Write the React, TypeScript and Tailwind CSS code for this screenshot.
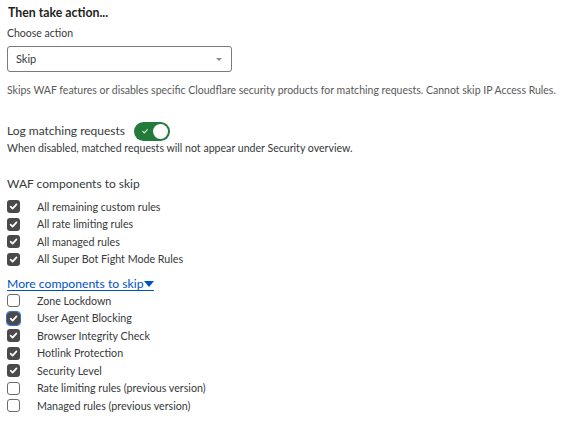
import { useState } from "react";

const waf = [
  "All remaining custom rules",
  "All rate limiting rules",
  "All managed rules",
  "All Super Bot Fight Mode Rules",
];

const more: { label: string; checked: boolean; focused?: boolean }[] = [
  { label: "Zone Lockdown", checked: false },
  { label: "User Agent Blocking", checked: true, focused: true },
  { label: "Browser Integrity Check", checked: true },
  { label: "Hotlink Protection", checked: true },
  { label: "Security Level", checked: true },
  { label: "Rate limiting rules (previous version)", checked: false },
  { label: "Managed rules (previous version)", checked: false },
];

const Box = ({ checked, focused }: { checked: boolean; focused?: boolean }) => (
  <span
    className={`flex h-[13px] w-[13px] items-center justify-center rounded-[3px] ${
      checked ? "bg-[#4a4a4a]" : "border border-[#6b6b6b] bg-white"
    } ${focused ? "outline outline-1 outline-[#2f6fdc]" : ""}`}
  >
    {checked && (
      <svg width="9" height="9" viewBox="0 0 10 10" fill="none">
        <path d="M1.8 5.2 4 7.3 8.3 2.6" stroke="white" strokeWidth="1.9" strokeLinecap="round" strokeLinejoin="round" />
      </svg>
    )}
  </span>
);

const Row = ({ label, checked, focused }: { label: string; checked: boolean; focused?: boolean }) => (
  <div className="flex h-[17.5px] items-center">
    <div className="w-[37px] pl-[7px]">
      <Box checked={checked} focused={focused} />
    </div>
    <span className="text-[10.7px] text-[#36393a]">{label}</span>
  </div>
);

export default function App() {
  const [log, setLog] = useState(true);
  return (
    <div className="min-h-screen bg-white font-['Lato',sans-serif] text-[#36393a]">
      <div className="pt-[4px]">
        <h4 className="pl-[8px] text-[12.3px] font-bold leading-[17px] text-[#1d1f20]">Then take action...</h4>
        <p className="mt-[5px] pl-[7px] text-[10.5px] leading-[15px]">Choose action</p>
        <button className="mt-[5px] ml-[7px] flex h-[26px] w-[225px] items-center justify-between rounded-[3px] border border-[#7a7a7a] pl-[8px] pr-[9px] text-[11px]">
          Skip
          <span className="h-0 w-0 border-x-[3px] border-t-[3px] border-x-transparent border-t-[#8a8a8a]" />
        </button>
        <p className="mt-[11px] whitespace-nowrap pl-[7px] text-[10.5px] leading-[15px] text-[#595959]">
          Skips WAF features or disables specific Cloudflare security products for matching requests. Cannot skip IP Access Rules.
        </p>

        <div className="mt-[23px] flex items-center pl-[7px]">
          <span className="text-[12px] leading-[20px]">Log matching requests</span>
          <button
            onClick={() => setLog((v) => !v)}
            className={`ml-[9px] flex h-[19px] w-[36px] items-center rounded-full p-[2px] ${
              log ? "bg-[#237b3b]" : "bg-[#9a9a9a]"
            }`}
          >
            <svg width="14" height="10" viewBox="0 0 14 10" className="ml-[2px]">
              <path d="M4.5 5.2 6.3 7 9.6 3.4" stroke="#d9ecd9" strokeWidth="1.2" fill="none" />
            </svg>
            <span className="ml-auto h-[15px] w-[15px] rounded-full bg-white" />
          </button>
        </div>
        <p className="mt-[0px] pl-[7px] text-[10.6px] leading-[14px]">
          When disabled, matched requests will not appear under Security overview.
        </p>

        <p className="mt-[20px] pl-[7px] text-[12px] leading-[17px]">WAF components to skip</p>
        <div className="mt-[6px]">
          {waf.map((w) => (
            <Row key={w} label={w} checked />
          ))}
        </div>

        <div className="mt-[10px] flex pl-[7px]">
          <a href="#" className="flex items-center border-b border-[#0051c3] text-[12.2px] leading-[12px] text-[#0051c3]">
            More components to skip
            <span className="ml-[1px] h-0 w-0 border-x-[5px] border-t-[6px] border-x-transparent border-t-[#0051c3]" />
          </a>
        </div>
        <div className="mt-[1px]">
          {more.map((m) => (
            <Row key={m.label} {...m} />
          ))}
        </div>
      </div>
    </div>
  );
}
